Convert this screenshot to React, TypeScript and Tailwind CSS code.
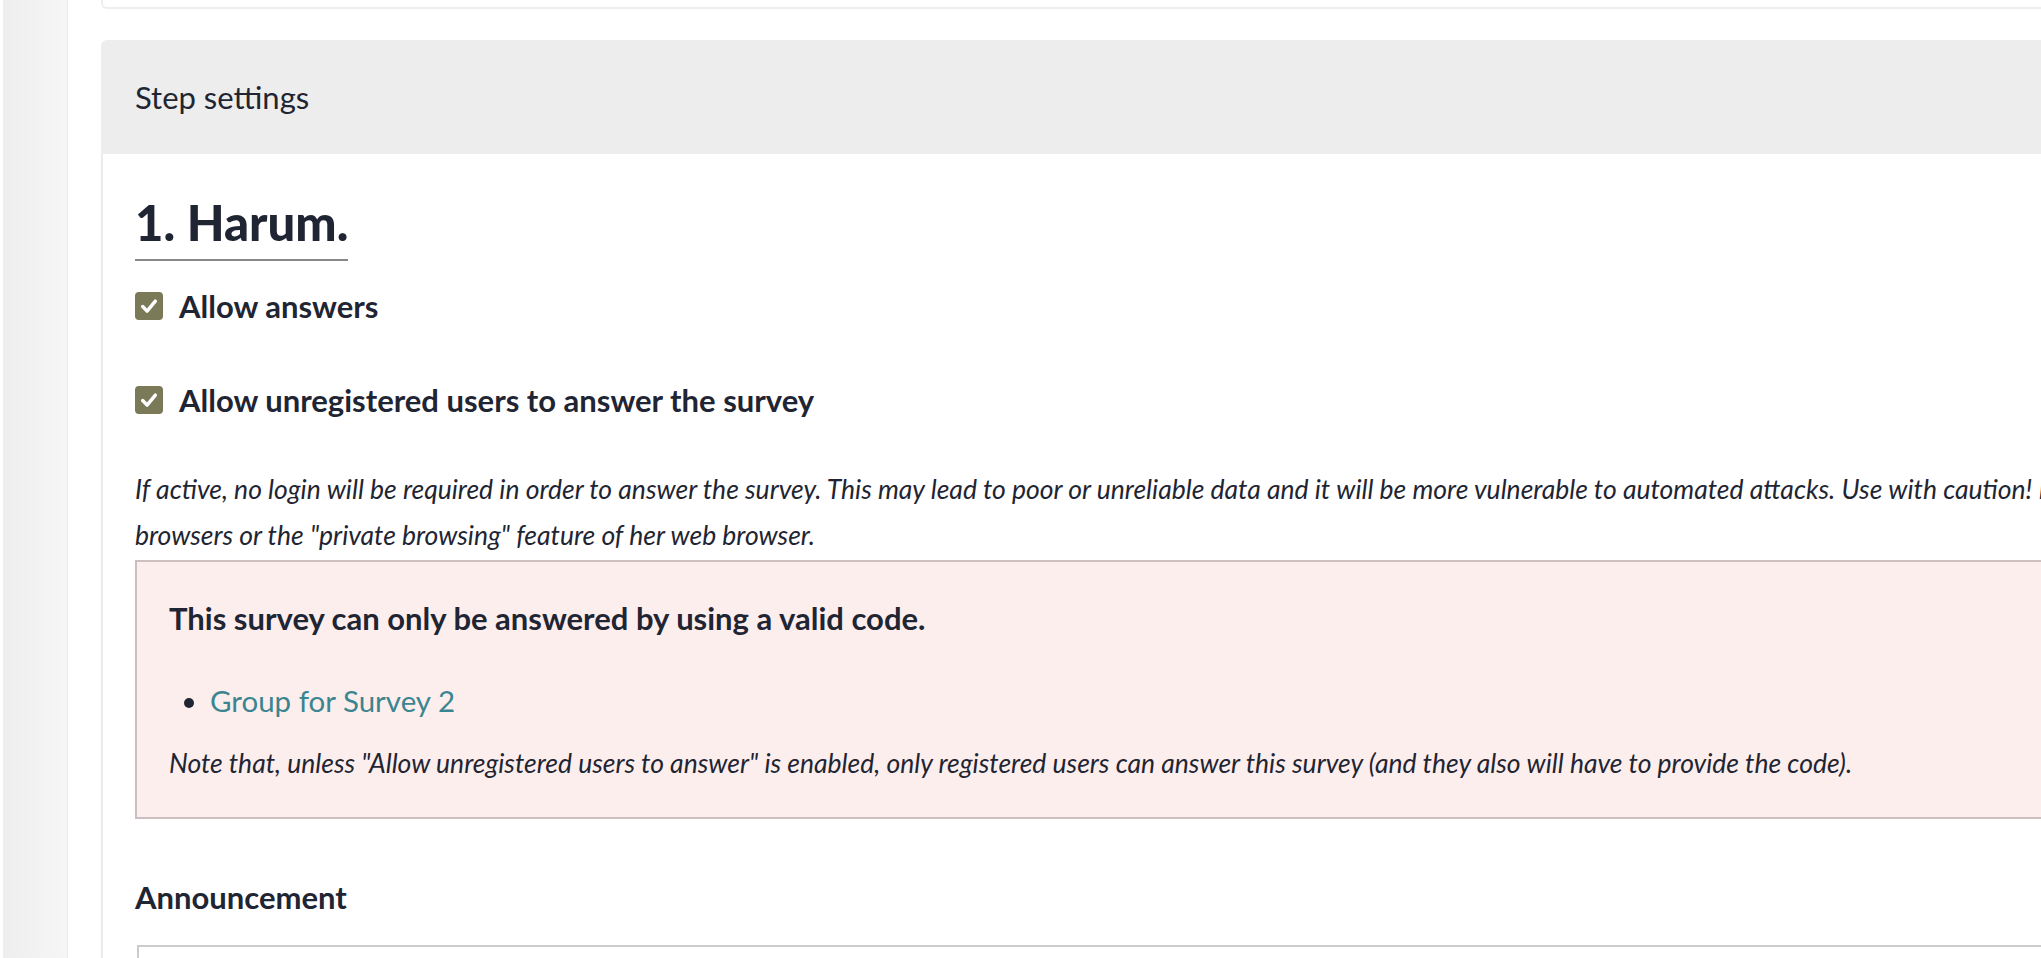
import React from "react";

function CheckBox() {
  return (
    <span className="flex h-[28px] w-[28px] shrink-0 items-center justify-center rounded-[4px] bg-[#7a7a59]">
      <svg viewBox="0 0 16 16" className="h-[22px] w-[22px]" fill="none">
        <path d="M3.4 8.4l3.2 3.3 6-7.2" stroke="#fff" strokeWidth="2.5" strokeLinecap="round" strokeLinejoin="round" />
      </svg>
    </span>
  );
}

function Option({ label }: { label: string }) {
  return (
    <label className="flex h-[40px] items-center gap-[16px]">
      <CheckBox />
      <span className="text-[31px] font-bold leading-[40px]">{label}</span>
    </label>
  );
}

export default function App() {
  return (
    <div className="flex h-[958px] w-[2041px] overflow-hidden bg-white text-[#1f2532] font-['Lato',sans-serif]">
      {/* left rail */}
      <div className="h-full w-[68px] shrink-0 border-l-[3px] border-r border-l-white border-r-[#e9e9e9] bg-gradient-to-r from-[#eeeeee] to-[#f6f6f6]" />

      <div className="flex-1 pl-[33px]">
        {/* previous card, only its bottom edge is visible */}
        <div className="h-[9px] w-[2200px] rounded-b-md border-2 border-t-0 border-[#eeeeee]" />

        <section className="mt-[31px] w-[2200px]">
          <div className="flex h-[114px] items-center rounded-t-md bg-[#ededed] px-[34px]">
            <span className="text-[31px] leading-none">Step settings</span>
          </div>

          <div className="border-l-2 border-[#ebebeb] pl-[32px] pt-[40px]">
            <h2 className="inline-block border-b-2 border-[#888888] pb-[9px] text-[49px] font-black leading-[56px]">
              1. Harum.
            </h2>

            <div className="mt-[25px]">
              <Option label="Allow answers" />
            </div>
            <div className="mt-[54px]">
              <Option label="Allow unregistered users to answer the survey" />
            </div>

            <p className="mt-[46px] whitespace-nowrap text-[26.5px] italic leading-[46px]">
              If active, no login will be required in order to answer the survey. This may lead to poor or unreliable data and it will be more vulnerable to automated attacks. Use with caution! Malicious users could answer several times using different
              <br />
              browsers or the "private browsing" feature of her web browser.
            </p>

            <div className="mt-[2px] border-2 border-[#cdbfc0] bg-[#fdeeee] px-[32px] pb-[34px] pt-[36px]">
              <p className="text-[31px] font-bold leading-[40px]">
                This survey can only be answered by using a valid code.
              </p>
              <ul className="mt-[43px] list-disc pl-[41px] text-[29.5px] leading-[40px] marker:text-[#1f2532]">
                <li>
                  <a className="text-[#3b8590]">Group for Survey 2</a>
                </li>
              </ul>
              <p className="mt-[22px] whitespace-nowrap text-[26.5px] italic leading-[40px]">
                Note that, unless "Allow unregistered users to answer" is enabled, only registered users can answer this survey (and they also will have to provide the code).
              </p>
            </div>

            <h3 className="mt-[58px] text-[31px] font-bold leading-[40px]">Announcement</h3>
            <div className="ml-[2px] mt-[28px] h-[80px] border-2 border-[#cccccc] bg-white" />
          </div>
        </section>
      </div>
    </div>
  );
}
